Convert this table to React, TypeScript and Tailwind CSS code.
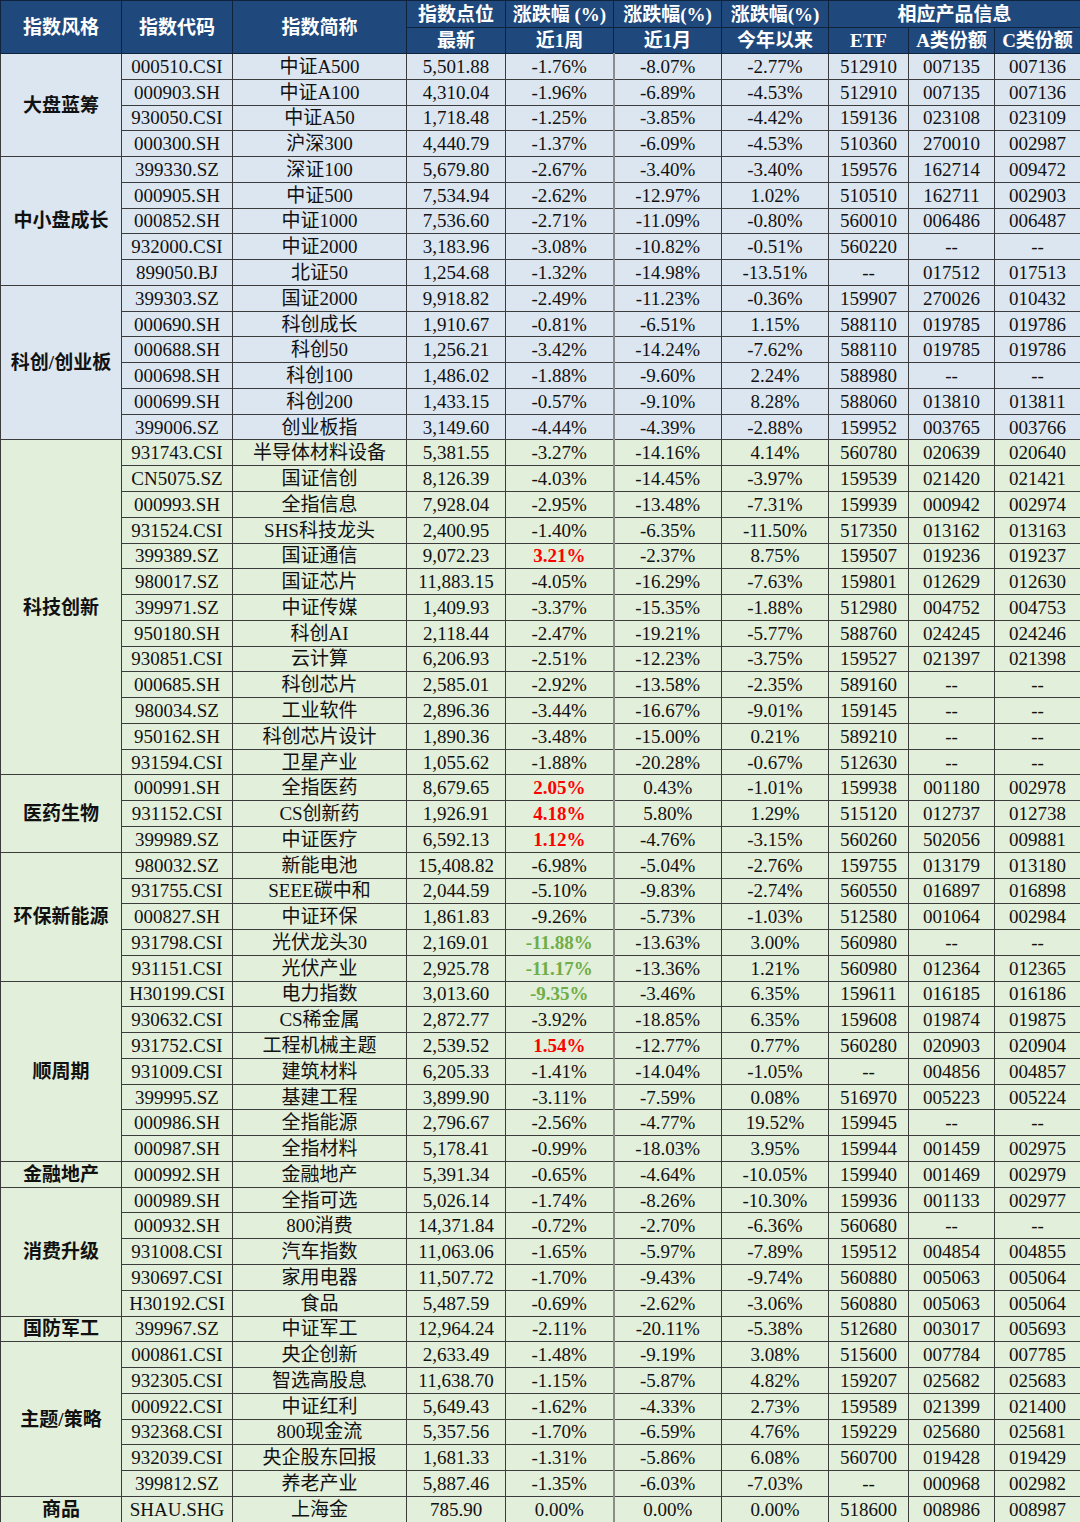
import React from "react";

type Row = [string, string, string, string, string, string, string, string, string];

interface Group {
  name: string;
  bg: string;
  rows: Row[];
}

const BLUE = "bg-[#dce6f1]";
const GREEN = "bg-[#e2efda]";

// "+" prefix = red bold, "~" prefix = green bold
const groups: Group[] = [
  {
    name: "大盘蓝筹",
    bg: BLUE,
    rows: [
      ["000510.CSI", "中证A500", "5,501.88", "-1.76%", "-8.07%", "-2.77%", "512910", "007135", "007136"],
      ["000903.SH", "中证A100", "4,310.04", "-1.96%", "-6.89%", "-4.53%", "512910", "007135", "007136"],
      ["930050.CSI", "中证A50", "1,718.48", "-1.25%", "-3.85%", "-4.42%", "159136", "023108", "023109"],
      ["000300.SH", "沪深300", "4,440.79", "-1.37%", "-6.09%", "-4.53%", "510360", "270010", "002987"],
    ],
  },
  {
    name: "中小盘成长",
    bg: BLUE,
    rows: [
      ["399330.SZ", "深证100", "5,679.80", "-2.67%", "-3.40%", "-3.40%", "159576", "162714", "009472"],
      ["000905.SH", "中证500", "7,534.94", "-2.62%", "-12.97%", "1.02%", "510510", "162711", "002903"],
      ["000852.SH", "中证1000", "7,536.60", "-2.71%", "-11.09%", "-0.80%", "560010", "006486", "006487"],
      ["932000.CSI", "中证2000", "3,183.96", "-3.08%", "-10.82%", "-0.51%", "560220", "--", "--"],
      ["899050.BJ", "北证50", "1,254.68", "-1.32%", "-14.98%", "-13.51%", "--", "017512", "017513"],
    ],
  },
  {
    name: "科创/创业板",
    bg: BLUE,
    rows: [
      ["399303.SZ", "国证2000", "9,918.82", "-2.49%", "-11.23%", "-0.36%", "159907", "270026", "010432"],
      ["000690.SH", "科创成长", "1,910.67", "-0.81%", "-6.51%", "1.15%", "588110", "019785", "019786"],
      ["000688.SH", "科创50", "1,256.21", "-3.42%", "-14.24%", "-7.62%", "588110", "019785", "019786"],
      ["000698.SH", "科创100", "1,486.02", "-1.88%", "-9.60%", "2.24%", "588980", "--", "--"],
      ["000699.SH", "科创200", "1,433.15", "-0.57%", "-9.10%", "8.28%", "588060", "013810", "013811"],
      ["399006.SZ", "创业板指", "3,149.60", "-4.44%", "-4.39%", "-2.88%", "159952", "003765", "003766"],
    ],
  },
  {
    name: "科技创新",
    bg: GREEN,
    rows: [
      ["931743.CSI", "半导体材料设备", "5,381.55", "-3.27%", "-14.16%", "4.14%", "560780", "020639", "020640"],
      ["CN5075.SZ", "国证信创", "8,126.39", "-4.03%", "-14.45%", "-3.97%", "159539", "021420", "021421"],
      ["000993.SH", "全指信息", "7,928.04", "-2.95%", "-13.48%", "-7.31%", "159939", "000942", "002974"],
      ["931524.CSI", "SHS科技龙头", "2,400.95", "-1.40%", "-6.35%", "-11.50%", "517350", "013162", "013163"],
      ["399389.SZ", "国证通信", "9,072.23", "+3.21%", "-2.37%", "8.75%", "159507", "019236", "019237"],
      ["980017.SZ", "国证芯片", "11,883.15", "-4.05%", "-16.29%", "-7.63%", "159801", "012629", "012630"],
      ["399971.SZ", "中证传媒", "1,409.93", "-3.37%", "-15.35%", "-1.88%", "512980", "004752", "004753"],
      ["950180.SH", "科创AI", "2,118.44", "-2.47%", "-19.21%", "-5.77%", "588760", "024245", "024246"],
      ["930851.CSI", "云计算", "6,206.93", "-2.51%", "-12.23%", "-3.75%", "159527", "021397", "021398"],
      ["000685.SH", "科创芯片", "2,585.01", "-2.92%", "-13.58%", "-2.35%", "589160", "--", "--"],
      ["980034.SZ", "工业软件", "2,896.36", "-3.44%", "-16.67%", "-9.01%", "159145", "--", "--"],
      ["950162.SH", "科创芯片设计", "1,890.36", "-3.48%", "-15.00%", "0.21%", "589210", "--", "--"],
      ["931594.CSI", "卫星产业", "1,055.62", "-1.88%", "-20.28%", "-0.67%", "512630", "--", "--"],
    ],
  },
  {
    name: "医药生物",
    bg: GREEN,
    rows: [
      ["000991.SH", "全指医药", "8,679.65", "+2.05%", "0.43%", "-1.01%", "159938", "001180", "002978"],
      ["931152.CSI", "CS创新药", "1,926.91", "+4.18%", "5.80%", "1.29%", "515120", "012737", "012738"],
      ["399989.SZ", "中证医疗", "6,592.13", "+1.12%", "-4.76%", "-3.15%", "560260", "502056", "009881"],
    ],
  },
  {
    name: "环保新能源",
    bg: GREEN,
    rows: [
      ["980032.SZ", "新能电池", "15,408.82", "-6.98%", "-5.04%", "-2.76%", "159755", "013179", "013180"],
      ["931755.CSI", "SEEE碳中和", "2,044.59", "-5.10%", "-9.83%", "-2.74%", "560550", "016897", "016898"],
      ["000827.SH", "中证环保", "1,861.83", "-9.26%", "-5.73%", "-1.03%", "512580", "001064", "002984"],
      ["931798.CSI", "光伏龙头30", "2,169.01", "~-11.88%", "-13.63%", "3.00%", "560980", "--", "--"],
      ["931151.CSI", "光伏产业", "2,925.78", "~-11.17%", "-13.36%", "1.21%", "560980", "012364", "012365"],
    ],
  },
  {
    name: "顺周期",
    bg: GREEN,
    rows: [
      ["H30199.CSI", "电力指数", "3,013.60", "~-9.35%", "-3.46%", "6.35%", "159611", "016185", "016186"],
      ["930632.CSI", "CS稀金属", "2,872.77", "-3.92%", "-18.85%", "6.35%", "159608", "019874", "019875"],
      ["931752.CSI", "工程机械主题", "2,539.52", "+1.54%", "-12.77%", "0.77%", "560280", "020903", "020904"],
      ["931009.CSI", "建筑材料", "6,205.33", "-1.41%", "-14.04%", "-1.05%", "--", "004856", "004857"],
      ["399995.SZ", "基建工程", "3,899.90", "-3.11%", "-7.59%", "0.08%", "516970", "005223", "005224"],
      ["000986.SH", "全指能源", "2,796.67", "-2.56%", "-4.77%", "19.52%", "159945", "--", "--"],
      ["000987.SH", "全指材料", "5,178.41", "-0.99%", "-18.03%", "3.95%", "159944", "001459", "002975"],
    ],
  },
  {
    name: "金融地产",
    bg: GREEN,
    rows: [["000992.SH", "金融地产", "5,391.34", "-0.65%", "-4.64%", "-10.05%", "159940", "001469", "002979"]],
  },
  {
    name: "消费升级",
    bg: GREEN,
    rows: [
      ["000989.SH", "全指可选", "5,026.14", "-1.74%", "-8.26%", "-10.30%", "159936", "001133", "002977"],
      ["000932.SH", "800消费", "14,371.84", "-0.72%", "-2.70%", "-6.36%", "560680", "--", "--"],
      ["931008.CSI", "汽车指数", "11,063.06", "-1.65%", "-5.97%", "-7.89%", "159512", "004854", "004855"],
      ["930697.CSI", "家用电器", "11,507.72", "-1.70%", "-9.43%", "-9.74%", "560880", "005063", "005064"],
      ["H30192.CSI", "食品", "5,487.59", "-0.69%", "-2.62%", "-3.06%", "560880", "005063", "005064"],
    ],
  },
  {
    name: "国防军工",
    bg: GREEN,
    rows: [["399967.SZ", "中证军工", "12,964.24", "-2.11%", "-20.11%", "-5.38%", "512680", "003017", "005693"]],
  },
  {
    name: "主题/策略",
    bg: GREEN,
    rows: [
      ["000861.CSI", "央企创新", "2,633.49", "-1.48%", "-9.19%", "3.08%", "515600", "007784", "007785"],
      ["932305.CSI", "智选高股息", "11,638.70", "-1.15%", "-5.87%", "4.82%", "159207", "025682", "025683"],
      ["000922.CSI", "中证红利", "5,649.43", "-1.62%", "-4.33%", "2.73%", "159589", "021399", "021400"],
      ["932368.CSI", "800现金流", "5,357.56", "-1.70%", "-6.59%", "4.76%", "159229", "025680", "025681"],
      ["932039.CSI", "央企股东回报", "1,681.33", "-1.31%", "-5.86%", "6.08%", "560700", "019428", "019429"],
      ["399812.SZ", "养老产业", "5,887.46", "-1.35%", "-6.03%", "-7.03%", "--", "000968", "002982"],
    ],
  },
  {
    name: "商品",
    bg: GREEN,
    rows: [["SHAU.SHG", "上海金", "785.90", "0.00%", "0.00%", "0.00%", "518600", "008986", "008987"]],
  },
];

const colWidths = [121, 111, 174, 99, 108, 108, 107, 80, 86, 86];

const cell = "border border-[#3c3c3c] text-center p-0 whitespace-nowrap";
const head = "border border-[#10233d] text-center p-0 font-bold text-white whitespace-nowrap";

function Value({ v }: { v: string }) {
  if (v.startsWith("+")) return <span className="font-bold text-[#ff0000]">{v.slice(1)}</span>;
  if (v.startsWith("~")) return <span className="font-bold text-[#70ad47]">{v.slice(1)}</span>;
  return <>{v}</>;
}

export default function App() {
  return (
    <div
      className="w-[1080px] h-[1522px] overflow-hidden bg-white text-[#111] text-[19px] leading-none"
      style={{ fontFamily: '"Liberation Serif", "Noto Sans CJK SC", serif' }}
    >
      <table className="w-[1080px] table-fixed border-collapse">
        <colgroup>
          {colWidths.map((w, i) => (
            <col key={i} style={{ width: w }} />
          ))}
        </colgroup>
        <thead className="bg-[#1f497d]">
          <tr className="h-[27px]">
            <th rowSpan={2} className={head}>指数风格</th>
            <th rowSpan={2} className={head}>指数代码</th>
            <th rowSpan={2} className={head}>指数简称</th>
            <th className={head}>指数点位</th>
            <th className={head}>涨跌幅 (%)</th>
            <th className={head}>涨跌幅(%)</th>
            <th className={head}>涨跌幅(%)</th>
            <th colSpan={3} className={head}>相应产品信息</th>
          </tr>
          <tr className="h-[26px]">
            <th className={head}>最新</th>
            <th className={head}>近1周</th>
            <th className={head}>近1月</th>
            <th className={head}>今年以来</th>
            <th className={head}>ETF</th>
            <th className={head}>A类份额</th>
            <th className={head}>C类份额</th>
          </tr>
        </thead>
        <tbody>
          {groups.map((g) =>
            g.rows.map((r, i) => (
              <tr key={g.name + r[0]} className={`h-[25.77px] ${g.bg}`}>
                {i === 0 && (
                  <td rowSpan={g.rows.length} className={`${cell} font-bold`}>
                    {g.name}
                  </td>
                )}
                {r.map((v, j) => (
                  <td
                    key={j}
                    className={`${cell} ${j === 4 ? "border-l-2 border-l-[#8c8c8c]" : ""}`}
                  >
                    <Value v={v} />
                  </td>
                ))}
              </tr>
            ))
          )}
        </tbody>
      </table>
    </div>
  );
}
